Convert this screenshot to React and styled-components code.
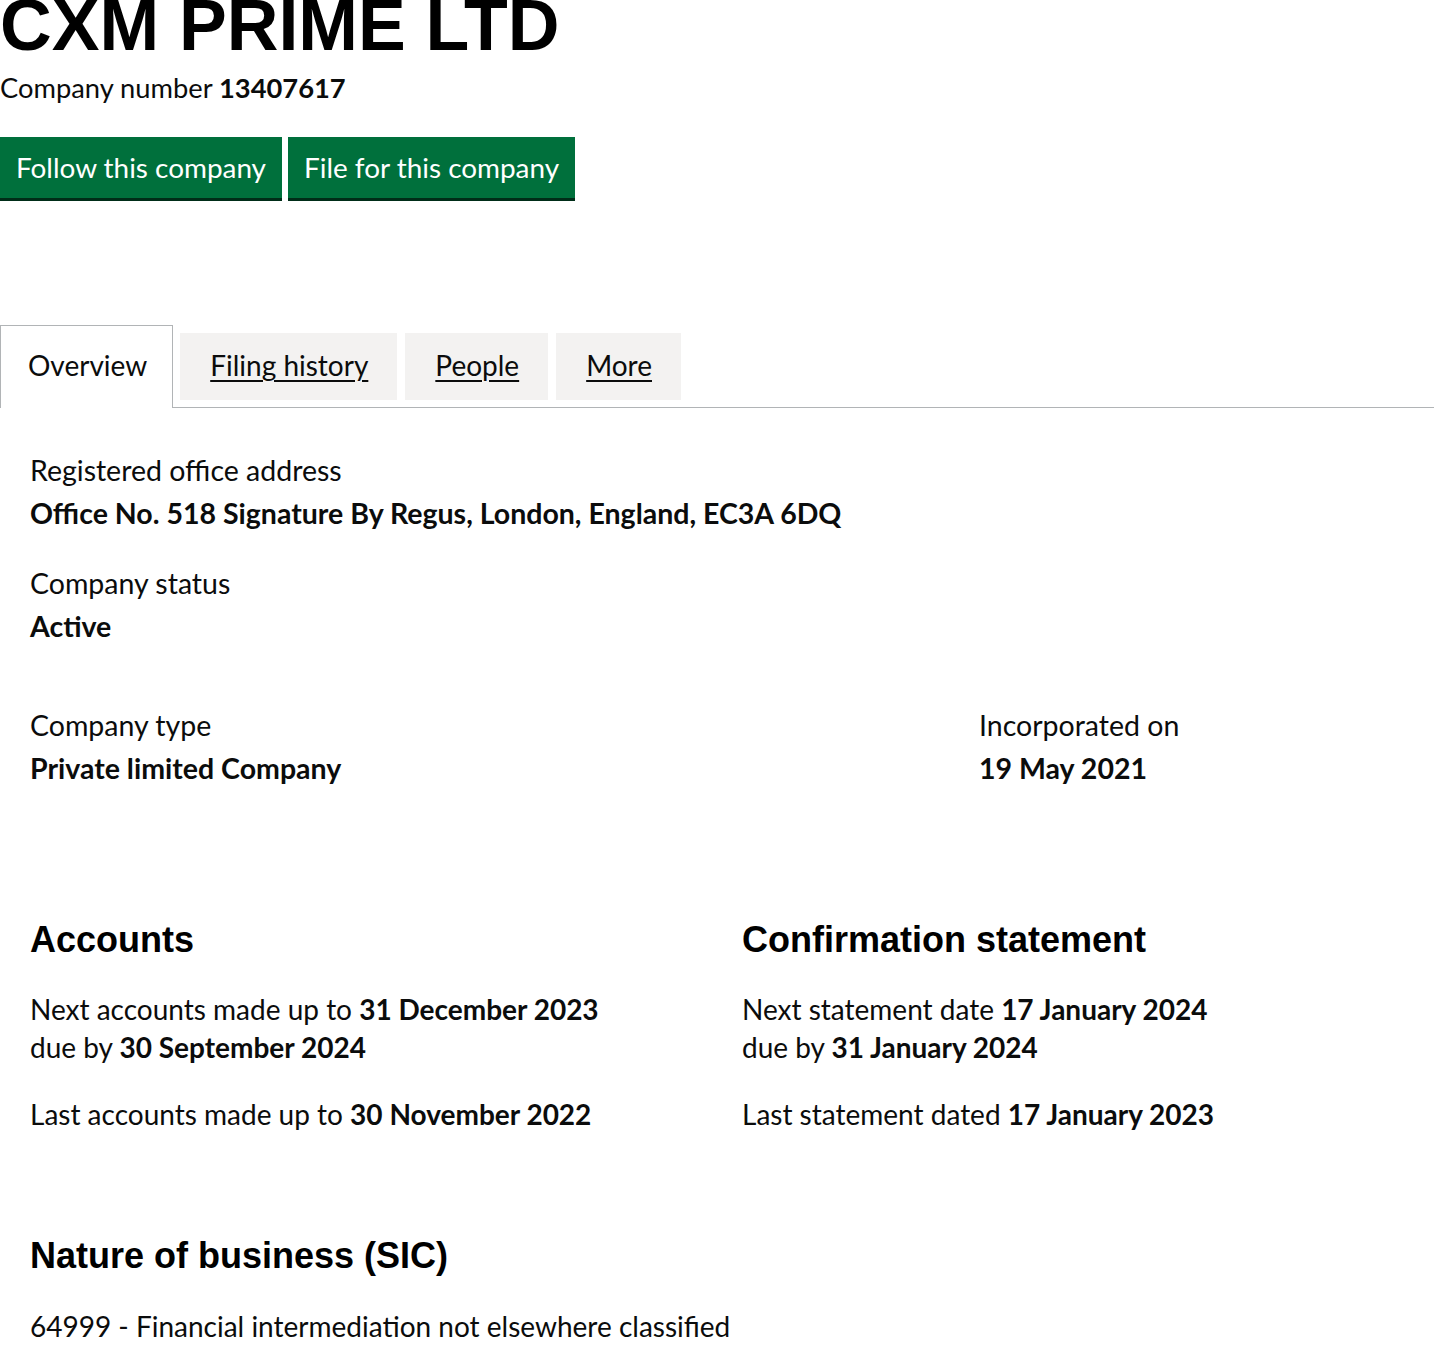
import { createGlobalStyle, styled } from "styled-components"

const GlobalStyle = createGlobalStyle`
  html, body {
    margin: 0;
    padding: 0;
    background: #ffffff;
  }
  body {
    font-family: Lato, "Noto Sans", sans-serif;
    color: #0b0c0c;
  }
`

const Page = styled.div`
  width: 1434px;
  overflow: hidden;
  padding-bottom: 40px;
`

const Title = styled.h1`
  margin: -11px 0 0;
  font-family: "Liberation Sans", Arial, sans-serif;
  font-weight: 700;
  font-size: 71.6px;
  line-height: 72px;
  color: #000;
`

const Body = styled.p`
  margin: ${p => p.$m || "0"};
  font-size: ${p => p.$size || "28px"};
  line-height: 38px;
`

const Strong = styled.strong`
  font-weight: 700;
`

const Actions = styled.div`
  display: flex;
  gap: 6px;
  margin-top: 30px;
`

const Button = styled.button`
  font-family: Lato, sans-serif;
  font-size: 27.9px;
  line-height: 38px;
  color: #fff;
  background: #00703c;
  border: 0;
  padding: 11px 16px 12px;
  box-shadow: 0 3px 0 #002d18;
  cursor: pointer;
`

const TabList = styled.ul`
  display: flex;
  align-items: flex-start;
  list-style: none;
  margin: 127px 0 0;
  padding: 0;
  border-bottom: 1px solid #b1b4b6;
`

const Tab = styled.li`
  font-size: 28px;
  line-height: 38px;
  ${p => p.$active ? `
    background: #fff;
    border: 1px solid #b1b4b6;
    border-bottom: 0;
    padding: 20px 25px 24px 27px;
    margin-bottom: -1px;
    margin-right: 7px;
  ` : `
    background: #f3f2f1;
    margin-top: 8px;
    margin-right: 8px;
    padding: 13px 29px 16px 30px;
  `}
`

const TabLink = styled.a`
  color: #0b0c0c;
  text-decoration: underline;
  text-decoration-thickness: 2px;
  text-underline-offset: 4px;
`

const Panel = styled.div`
  padding: 43px 30px 0;
`

const Field = styled.div`
  margin-bottom: ${p => p.$gap || "32px"};
`

const Label = styled.p`
  margin: 0 0 5px;
  font-size: 28.5px;
  line-height: 38px;
`

const Value = styled.p`
  margin: 0;
  font-size: 28.5px;
  line-height: 38px;
  font-weight: 700;
`

const Row = styled.div`
  display: grid;
  grid-template-columns: ${p => p.$cols};
  margin-top: ${p => p.$top || "0"};
`

const Heading = styled.h2`
  margin: 0 0 ${p => p.$gap || "30px"};
  font-family: "Liberation Sans", Arial, sans-serif;
  font-weight: 700;
  font-size: 36px;
  line-height: 40px;
  color: #000;
`

const Section = styled.section`
  margin-top: ${p => p.$top || "0"};
`

function App() {
  return (
    <Page>
      <GlobalStyle />
      <Title>CXM PRIME LTD</Title>
      <Body $m="8px 0 0" $size="27.3px">
        Company number <Strong>13407617</Strong>
      </Body>
      <Actions>
        <Button>Follow this company</Button>
        <Button>File for this company</Button>
      </Actions>

      <TabList>
        <Tab $active>Overview</Tab>
        <Tab><TabLink href="#">Filing history</TabLink></Tab>
        <Tab><TabLink href="#">People</TabLink></Tab>
        <Tab><TabLink href="#">More</TabLink></Tab>
      </TabList>

      <Panel>
        <Field>
          <Label>Registered office address</Label>
          <Value>Office No. 518 Signature By Regus, London, England, EC3A 6DQ</Value>
        </Field>
        <Field $gap="61px">
          <Label>Company status</Label>
          <Value>Active</Value>
        </Field>
        <Row $cols="949px 1fr">
          <Field $gap="0">
            <Label>Company type</Label>
            <Value>Private limited Company</Value>
          </Field>
          <Field $gap="0">
            <Label>Incorporated on</Label>
            <Value>19 May 2021</Value>
          </Field>
        </Row>

        <Row $cols="712px 1fr" $top="133px">
          <Section>
            <Heading>Accounts</Heading>
            <Body>
              Next accounts made up to <Strong>31 December 2023</Strong>
              <br />
              due by <Strong>30 September 2024</Strong>
            </Body>
            <Body $m="29px 0 0">
              Last accounts made up to <Strong>30 November 2022</Strong>
            </Body>
          </Section>
          <Section>
            <Heading>Confirmation statement</Heading>
            <Body>
              Next statement date <Strong>17 January 2024</Strong>
              <br />
              due by <Strong>31 January 2024</Strong>
            </Body>
            <Body $m="29px 0 0">
              Last statement dated <Strong>17 January 2023</Strong>
            </Body>
          </Section>
        </Row>

        <Section $top="103px">
          <Heading $gap="31px">Nature of business (SIC)</Heading>
          <Body>64999 - Financial intermediation not elsewhere classified</Body>
        </Section>
      </Panel>
    </Page>
  )
}

export default App
